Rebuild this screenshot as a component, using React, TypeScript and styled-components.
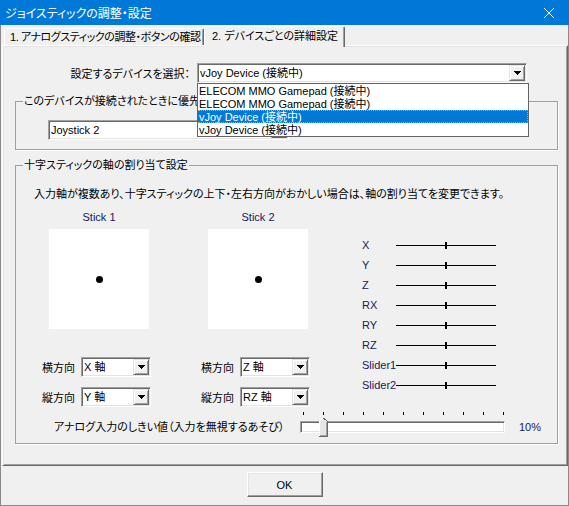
import styled, { createGlobalStyle } from "styled-components";

const GlobalStyle = createGlobalStyle`
  html, body {
    margin: 0;
    padding: 0;
    background: #f0f0f0;
  }
  body {
    font-family: "Liberation Sans", "Noto Sans CJK JP", sans-serif;
    font-size: 11px;
    font-feature-settings: "palt";
    color: #000;
  }
  * {
    box-sizing: border-box;
  }
`;

const devices = [
  "ELECOM MMO Gamepad (接続中)",
  "ELECOM MMO Gamepad (接続中)",
  "vJoy Device (接続中)",
  "vJoy Device (接続中)",
];

const axes = ["X", "Y", "Z", "RX", "RY", "RZ", "Slider1", "Slider2"];

const sticks = [
  { name: "Stick 1", horizontal: "X 軸", vertical: "Y 軸" },
  { name: "Stick 2", horizontal: "Z 軸", vertical: "RZ 軸" },
];

const deadzone = 10;

const Window = styled.div`
  width: 569px;
  height: 506px;
  display: flex;
  flex-direction: column;
  background: #f0f0f0;
`;

const TitleBar = styled.div`
  height: 25px;
  flex: 0 0 25px;
  display: flex;
  align-items: center;
  padding-left: 5px;
  background: #0078d7;
  color: #fff;
  font-size: 12px;
`;

const CloseButton = styled.div`
  margin-left: auto;
  width: 40px;
  height: 25px;
  display: flex;
  align-items: center;
  justify-content: center;
`;

const Body = styled.div`
  flex: 1;
  display: flex;
  flex-direction: column;
  border: 1px solid #8a8a8a;
  border-top: none;
`;

const TabStrip = styled.div`
  height: 20px;
  flex: 0 0 20px;
  display: flex;
  align-items: flex-end;
  padding-left: 3px;
`;

const Tab = styled.div<{ $active?: boolean; $width: number }>`
  position: relative;
  z-index: ${(p) => (p.$active ? 2 : 1)};
  width: ${(p) => p.$width}px;
  height: ${(p) => (p.$active ? 21 : 17)}px;
  margin-bottom: ${(p) => (p.$active ? -2 : 0)}px;
  padding-left: ${(p) => (p.$active ? 7 : 5)}px;
  padding-top: ${(p) => (p.$active ? 2 : 1)}px;
  line-height: 14px;
  letter-spacing: ${(p) => (p.$active ? 0 : -0.45)}px;
  white-space: nowrap;
  background: #f0f0f0;
  border: 1px solid;
  border-bottom: none;
  border-color: #fff #696969 transparent #fff;
  border-radius: 2px 2px 0 0;
  box-shadow: inset -1px 0 #a0a0a0;
`;

const Panel = styled.div`
  flex: 0 0 421px;
  margin-left: 1px;
  padding: 0 9px 0 12px;
  display: flex;
  flex-direction: column;
  border: 1px solid;
  border-color: #fff #696969 #696969 #fff;
  box-shadow: inset 1px 1px #e3e3e3, inset -1px -1px #a0a0a0;
`;

const DeviceRow = styled.div`
  margin-top: 17px;
  display: flex;
  align-items: center;
  height: 20px;
`;

const DeviceLabel = styled.div`
  width: 175px;
  margin-right: 7px;
  text-align: right;
  white-space: nowrap;
`;

const ComboHolder = styled.div`
  position: relative;
`;

const ComboBox = styled.div<{ $width: number }>`
  display: flex;
  align-items: center;
  width: ${(p) => p.$width}px;
  height: 20px;
  padding: 1px 1px 1px 2px;
  background: #fff;
  border: 1px solid;
  border-color: #a0a0a0 #fff #fff #a0a0a0;
  box-shadow: inset 1px 1px #696969, inset -1px -1px #e3e3e3;
`;

const ComboText = styled.div`
  flex: 1;
  line-height: 14px;
  white-space: nowrap;
  overflow: hidden;
`;

const DropButton = styled.div`
  width: 16px;
  height: 16px;
  flex: 0 0 16px;
  display: flex;
  align-items: center;
  justify-content: center;
  background: #f0f0f0;
  border: 1px solid;
  border-color: #e3e3e3 #696969 #696969 #e3e3e3;
  box-shadow: inset 1px 1px #fff, inset -1px -1px #a0a0a0;
`;

const DropList = styled.ul`
  position: absolute;
  z-index: 10;
  top: 20px;
  left: 0;
  width: 332px;
  margin: 0;
  padding: 0;
  list-style: none;
  background: #fff;
  border: 1px solid #646464;
`;

const DropItem = styled.li<{ $selected?: boolean }>`
  height: 13px;
  padding-left: 1px;
  line-height: 12px;
  white-space: nowrap;
  color: ${(p) => (p.$selected ? "#fff" : "#000")};
  background: ${(p) => (p.$selected ? "#0078d7" : "transparent")};
  border: 1px dotted ${(p) => (p.$selected ? "#f59a3a" : "transparent")};
  border-left: none;
  border-right: 1px dotted ${(p) => (p.$selected ? "#f59a3a" : "transparent")};
`;

const Group = styled.fieldset<{ $gap: number }>`
  margin: ${(p) => p.$gap}px 0 0;
  padding: 0;
  min-width: 0;
  border: 1px solid #a0a0a0;
  box-shadow: 1px 1px #fff;
`;

const GroupTitle = styled.legend`
  margin-left: 7px;
  padding: 0 1px;
  line-height: 14px;
  white-space: nowrap;
`;

const GroupBody = styled.div<{ $pad: string }>`
  padding: ${(p) => p.$pad};
`;

const Description = styled.div`
  margin: 15px 0 0 18px;
  line-height: 14px;
  white-space: nowrap;
`;

const MainArea = styled.div`
  margin-top: 9px;
  display: flex;
  padding-left: 26px;
`;

const StickColumn = styled.div`
  width: 112px;
  display: flex;
  flex-direction: column;
  & + & {
    margin-left: 47px;
  }
`;

const StickFace = styled.div`
  width: 100px;
  margin-left: 7px;
`;

const StickName = styled.div`
  line-height: 14px;
  text-align: center;
  color: #14205a;
`;

const StickPad = styled.div`
  margin-top: 5px;
  width: 100px;
  height: 100px;
  background: #fff;
  display: flex;
  align-items: center;
  justify-content: center;
`;

const StickDot = styled.div`
  width: 7px;
  height: 7px;
  border-radius: 50%;
  background: #000;
`;

const AxisSelects = styled.div`
  margin-top: 28px;
  display: flex;
  flex-direction: column;
  gap: 10px;
`;

const SelectRow = styled.div`
  display: flex;
  align-items: center;
`;

const SelectLabel = styled.div`
  margin-right: 6px;
  white-space: nowrap;
`;

const AxisList = styled.div`
  margin: 25px 0 0 49px;
  display: flex;
  flex-direction: column;
`;

const AxisRow = styled.div`
  height: 20px;
  display: flex;
  align-items: center;
`;

const AxisName = styled.div`
  width: 34px;
  white-space: nowrap;
  color: #14205a;
`;

const ThresholdRow = styled.div`
  margin-top: 3px;
  display: flex;
  padding-left: 38px;
`;

const ThresholdLabel = styled.div`
  flex: 0 0 246px;
  align-self: flex-end;
  line-height: 20px;
  white-space: nowrap;
`;

const Slider = styled.div`
  width: 205px;
  display: flex;
  flex-direction: column;
`;

const Ticks = styled.div`
  height: 7px;
  margin-left: 3px;
  width: 201px;
  display: flex;
  justify-content: space-between;
  align-items: flex-start;
  padding-top: 2px;
`;

const Tick = styled.div`
  width: 1px;
  height: 3px;
  background: #000;
`;

const TrackArea = styled.div`
  position: relative;
  height: 20px;
  padding-top: 4px;
`;

const Track = styled.div`
  height: 12px;
  background: #fff;
  border: 1px solid;
  border-color: #a0a0a0 #fff #fff #a0a0a0;
  box-shadow: inset 1px 1px #696969, inset -1px -1px #e3e3e3;
`;

const Thumb = styled.svg`
  position: absolute;
  top: 0;
`;

const ThresholdValue = styled.div`
  margin-left: 14px;
  align-self: flex-end;
  line-height: 20px;
  color: #14205a;
`;

const Footer = styled.div`
  flex: 1;
  display: flex;
  justify-content: center;
  padding-top: 6px;
`;

const OkButton = styled.button`
  width: 76px;
  height: 25px;
  font: inherit;
  color: #000;
  background: #f0f0f0;
  border: 1px solid;
  border-color: #fff #696969 #696969 #fff;
  box-shadow: inset -1px -1px #a0a0a0, inset 1px 1px #e3e3e3;
  padding: 0;
`;

const Arrow = () => (
  <svg width="7" height="4" viewBox="0 0 7 4" shapeRendering="crispEdges">
    <path d="M0 0h7v1H0zM1 1h5v1H1zM2 2h3v1H2zM3 3h1v1H3z" fill="#000" />
  </svg>
);

const Combo = ({ width, value }: { width: number; value: string }) => (
  <ComboBox $width={width}>
    <ComboText>{value}</ComboText>
    <DropButton>
      <Arrow />
    </DropButton>
  </ComboBox>
);

const AxisMeter = () => (
  <svg width="100" height="9" viewBox="0 0 100 9" shapeRendering="crispEdges">
    <rect x="0" y="4" width="100" height="1" fill="#000" />
    <rect x="49" y="1" width="2" height="7" fill="#000" />
  </svg>
);

export default function App() {
  const thumbLeft = 3 + (200 * deadzone) / 100 - 4;

  return (
    <Window>
      <GlobalStyle />
      <TitleBar>
        ジョイスティックの調整・設定
        <CloseButton>
          <svg width="10" height="10" viewBox="0 0 10 10">
            <path d="M0 0L10 10M10 0L0 10" stroke="#fff" strokeWidth="1" />
          </svg>
        </CloseButton>
      </TitleBar>
      <Body>
        <TabStrip>
          <Tab $width={200}>1. アナログスティックの調整・ボタンの確認</Tab>
          <Tab $width={141} $active>
            2. デバイスごとの詳細設定
          </Tab>
        </TabStrip>
        <Panel>
          <DeviceRow>
            <DeviceLabel>設定するデバイスを選択：</DeviceLabel>
            <ComboHolder>
              <Combo width={330} value="vJoy Device (接続中)" />
              <DropList>
                {devices.map((d, i) => (
                  <DropItem key={i} $selected={i === 2}>
                    {d}
                  </DropItem>
                ))}
              </DropList>
            </ComboHolder>
          </DeviceRow>

          <Group $gap={11}>
            <GroupTitle>このデバイスが接続されたときに優先的に使う名前</GroupTitle>
            <GroupBody $pad="12px 0 9px 32px">
              <Combo width={241} value="Joystick 2" />
            </GroupBody>
          </Group>

          <Group $gap={8}>
            <GroupTitle>十字スティックの軸の割り当て設定</GroupTitle>
            <GroupBody $pad="0 0 6px 0">
              <Description>
                入力軸が複数あり、十字スティックの上下・左右方向がおかしい場合は、軸の割り当てを変更できます。
              </Description>
              <MainArea>
                {sticks.map((s) => (
                  <StickColumn key={s.name}>
                    <StickFace>
                      <StickName>{s.name}</StickName>
                      <StickPad>
                        <StickDot />
                      </StickPad>
                    </StickFace>
                    <AxisSelects>
                      <SelectRow>
                        <SelectLabel>横方向</SelectLabel>
                        <Combo width={70} value={s.horizontal} />
                      </SelectRow>
                      <SelectRow>
                        <SelectLabel>縦方向</SelectLabel>
                        <Combo width={70} value={s.vertical} />
                      </SelectRow>
                    </AxisSelects>
                  </StickColumn>
                ))}
                <AxisList>
                  {axes.map((a) => (
                    <AxisRow key={a}>
                      <AxisName>{a}</AxisName>
                      <AxisMeter />
                    </AxisRow>
                  ))}
                </AxisList>
              </MainArea>
              <ThresholdRow>
                <ThresholdLabel>アナログ入力のしきい値（入力を無視するあそび）</ThresholdLabel>
                <Slider>
                  <Ticks>
                    {Array.from({ length: 11 }, (_, i) => (
                      <Tick key={i} />
                    ))}
                  </Ticks>
                  <TrackArea>
                    <Track />
                    <Thumb
                      width="9"
                      height="20"
                      viewBox="0 0 9 20"
                      shapeRendering="crispEdges"
                      style={{ left: thumbLeft }}
                    >
                      <path d="M0 4L4 0L8 4V19H0Z" fill="#e6e6e6" />
                      <path d="M0.5 19V4.5L4 1" stroke="#fff" fill="none" />
                      <path d="M4.5 1L8.5 4.5V19.5H0" stroke="#696969" fill="none" />
                      <path d="M7.5 5V18.5H1" stroke="#a0a0a0" fill="none" />
                    </Thumb>
                  </TrackArea>
                </Slider>
                <ThresholdValue>{deadzone}%</ThresholdValue>
              </ThresholdRow>
            </GroupBody>
          </Group>
        </Panel>
        <Footer>
          <OkButton>OK</OkButton>
        </Footer>
      </Body>
    </Window>
  );
}
